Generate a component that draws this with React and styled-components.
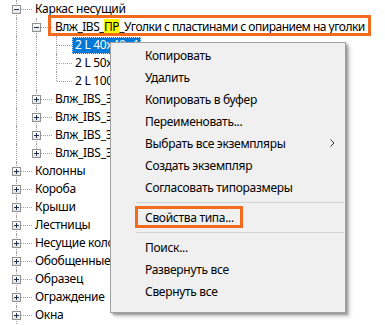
import React from 'react';
import styled, { createGlobalStyle, css } from 'styled-components';

const GlobalStyle = createGlobalStyle`
  html, body { margin: 0; padding: 0; background: #fff; }
  body {
    font-family: "Segoe UI", "Noto Sans", "Open Sans", sans-serif;
    font-size: 12px;
    letter-spacing: -0.3px;
    color: #000;
    overflow: hidden;
  }
`;

const Screen = styled.div`
  position: relative;
  width: 385px;
  height: 325px;
  overflow: hidden;
  background: #fff;
`;

const Tree = styled.ul`
  list-style: none;
  margin: 0;
  padding: 0 0 0 6px;
`;

const Row = styled.li`
  display: flex;
  height: 18px;
  align-items: center;
`;

const dotted = '#a0a0a0';

const Guide = styled.span`
  position: relative;
  flex: none;
  width: 20px;
  height: 18px;
  ${(p) => p.$line && css`
    &::before {
      content: '';
      position: absolute;
      left: 10px;
      top: 0;
      bottom: 0;
      border-left: 1px dotted ${dotted};
    }
  `}
`;

const Connector = styled.span`
  position: relative;
  flex: none;
  width: 26px;
  height: 18px;
  &::before {
    content: '';
    position: absolute;
    left: 10px;
    top: 0;
    height: ${(p) => (p.$last ? '9px' : '18px')};
    border-left: 1px dotted ${dotted};
  }
  &::after {
    content: '';
    position: absolute;
    left: 11px;
    right: 0;
    top: 9px;
    border-top: 1px dotted ${dotted};
  }
`;

const Expander = styled.span`
  position: absolute;
  left: 6px;
  top: 5px;
  width: 9px;
  height: 9px;
  box-sizing: border-box;
  border: 1px solid #919191;
  background: linear-gradient(#ffffff, #e4e4e4);
  z-index: 1;
  &::before {
    content: '';
    position: absolute;
    left: 1px;
    top: 3px;
    width: 5px;
    height: 1px;
    background: #1f2f4f;
  }
  ${(p) => p.$collapsed && css`
    &::after {
      content: '';
      position: absolute;
      left: 3px;
      top: 1px;
      width: 1px;
      height: 5px;
      background: #1f2f4f;
    }
  `}
`;

const Label = styled.span`
  position: relative;
  display: inline-flex;
  align-items: center;
  height: 17px;
  padding: 0 3px;
  white-space: nowrap;
  line-height: 16px;
  ${(p) => p.$selected && css`
    background: #0078d7;
    color: #fff;
    outline: 1px dotted #e0e0e0;
    outline-offset: -1px;
  `}
  ${(p) => p.$annotated && css`
    letter-spacing: -0.5px;
    &::after {
      content: '';
      position: absolute;
      left: -4px;
      right: -3px;
      top: -4px;
      bottom: 0px;
      border: 3px solid #f26b1d;
    }
  `}
`;

const Mark = styled.span`
  background: #ffff00;
`;

const Menu = styled.div`
  position: absolute;
  left: 110px;
  top: 42px;
  width: 236px;
  height: 271px;
  box-sizing: border-box;
  background: #f0f0f0;
  border: 1px solid #a0a0a0;
  box-shadow: 2px 2px 2px rgba(0, 0, 0, 0.3), 4px 4px 4px rgba(0, 0, 0, 0.15);
  padding: 1px 0;
  z-index: 5;
`;

const MenuItem = styled.div`
  position: relative;
  height: 22px;
  display: flex;
  align-items: center;
  padding-left: 34px;
  white-space: nowrap;
`;

const ItemText = styled.span`
  ${(p) => p.$annotated && css`
    margin-left: -10px;
    padding: 0 6px 0 7px;
    height: 22px;
    box-sizing: border-box;
    display: inline-flex;
    align-items: center;
    border: 3px solid #f26b1d;
  `}
`;

const Chevron = styled.svg`
  position: absolute;
  right: 10px;
  top: 7px;
`;

const Separator = styled.div`
  height: 8px;
  margin: 0 1px 0 25px;
  display: flex;
  align-items: center;
  &::before {
    content: '';
    flex: 1;
    height: 1px;
    background: #d2d2d2;
  }
`;

const rows = [
  { depth: 0, guides: [], label: 'Каркас несущий', box: 'open' },
  { depth: 1, guides: [true], label: 'ANNOT', box: 'open' },
  { depth: 2, guides: [true, true], label: '2 L 40x40x4', selected: true },
  { depth: 2, guides: [true, true], label: '2 L 50x50x5' },
  { depth: 2, guides: [true, true], label: '2 L 100x100x10', last: true },
  { depth: 1, guides: [true], label: 'Влж_IBS_Эл_Двутавры', box: 'closed' },
  { depth: 1, guides: [true], label: 'Влж_IBS_Эл_Швеллеры', box: 'closed' },
  { depth: 1, guides: [true], label: 'Влж_IBS_Эл_Трубы', box: 'closed' },
  { depth: 1, guides: [true], label: 'Влж_IBS_Эл_Уголки', box: 'closed', last: true },
  { depth: 0, guides: [], label: 'Колонны', box: 'closed' },
  { depth: 0, guides: [], label: 'Короба', box: 'closed' },
  { depth: 0, guides: [], label: 'Крыши', box: 'closed' },
  { depth: 0, guides: [], label: 'Лестницы', box: 'closed' },
  { depth: 0, guides: [], label: 'Несущие колонны', box: 'closed' },
  { depth: 0, guides: [], label: 'Обобщенные модели', box: 'closed' },
  { depth: 0, guides: [], label: 'Образец', box: 'closed' },
  { depth: 0, guides: [], label: 'Ограждение', box: 'closed' },
  { depth: 0, guides: [], label: 'Окна', box: 'closed' },
];

const menu = [
  { t: 'Копировать' },
  { t: 'Удалить' },
  { t: 'Копировать в буфер' },
  { t: 'Переименовать...' },
  { t: 'Выбрать все экземпляры', sub: true },
  { t: 'Создать экземпляр' },
  { t: 'Согласовать типоразмеры' },
  { sep: true },
  { t: 'Свойства типа...', annotated: true },
  { sep: true },
  { t: 'Поиск...' },
  { t: 'Развернуть все' },
  { t: 'Свернуть все' },
];

export default function App() {
  return (
    <Screen>
      <GlobalStyle />
      <Tree>
        {rows.map((r, i) => (
          <Row key={i}>
            {r.guides.map((g, j) => (
              <Guide key={j} $line={g} />
            ))}
            <Connector $last={r.last}>
              {r.box && <Expander $collapsed={r.box === 'closed'} />}
            </Connector>
            {r.label === 'ANNOT' ? (
              <Label $annotated>
                Влж_IBS_<Mark>ПР</Mark>_Уголки с пластинами с опиранием на уголки
              </Label>
            ) : (
              <Label $selected={r.selected}>{r.label}</Label>
            )}
          </Row>
        ))}
      </Tree>
      <Menu>
        {menu.map((m, i) =>
          m.sep ? (
            <Separator key={i} />
          ) : (
            <MenuItem key={i}>
              <ItemText $annotated={m.annotated}>{m.t}</ItemText>
              {m.sub && (
                <Chevron width="5" height="8" viewBox="0 0 5 8">
                  <path d="M0.5 0.5 L4 4 L0.5 7.5" fill="none" stroke="#333" strokeWidth="1" />
                </Chevron>
              )}
            </MenuItem>
          )
        )}
      </Menu>
    </Screen>
  );
}
